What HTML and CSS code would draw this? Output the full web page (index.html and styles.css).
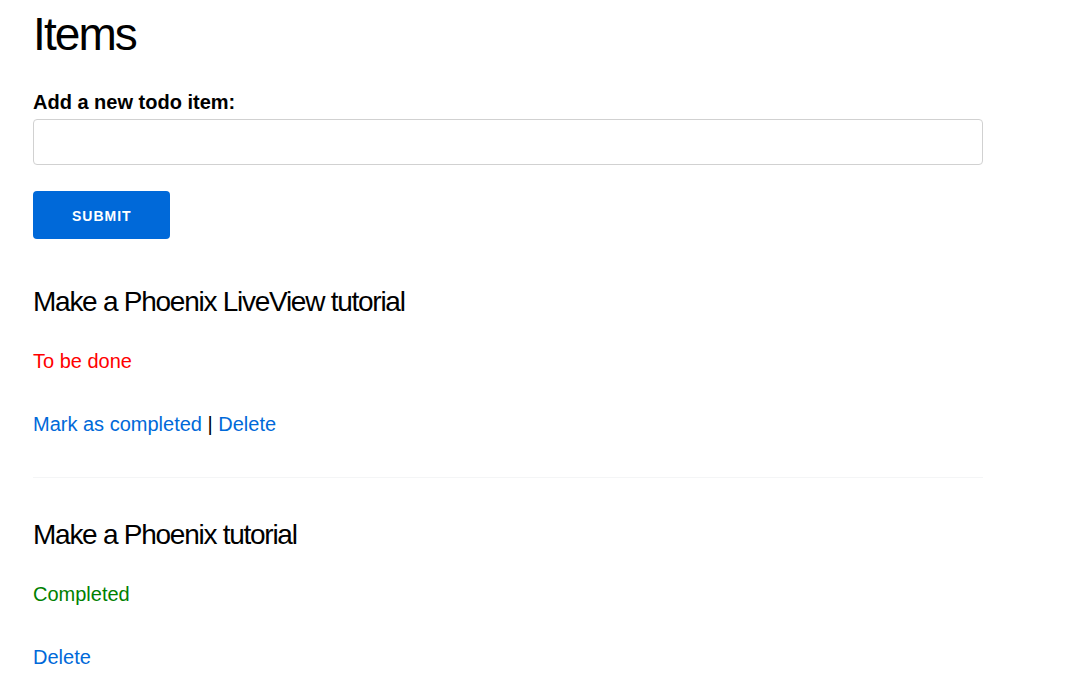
FILE: index.html
```html
<!DOCTYPE html>
<html lang="en">
<head>
  <meta charset="UTF-8">
  <title>Items</title>
  <link rel="stylesheet" href="styles.css">
</head>
<body>
  <main class="container">
    <h1>Items</h1>
    <form class="new-item">
      <label for="item-text">Add a new todo item:</label>
      <input type="text" id="item-text" name="text">
      <button type="submit">Submit</button>
    </form>

    <section class="item">
      <h3>Make a Phoenix LiveView tutorial</h3>
      <p class="status todo">To be done</p>
      <p class="actions"><a href="#">Mark as completed</a> | <a href="#">Delete</a></p>
    </section>
    <hr>
    <section class="item">
      <h3>Make a Phoenix tutorial</h3>
      <p class="status done">Completed</p>
      <p class="actions"><a href="#">Delete</a></p>
    </section>
  </main>
</body>
</html>
```

FILE: styles.css
```css
html, body {
  margin: 0;
  padding: 0;
  background: #fff;
  color: #000;
  font-family: "Liberation Sans", Arial, sans-serif;
  font-size: 20px;
}
.container {
  width: 950px;
  padding: 6px 0 0 33px;
}
h1 {
  margin: 0;
  font-size: 46px;
  line-height: 56px;
  font-weight: 400;
  letter-spacing: -1.9px;
}
h3 {
  margin: 0;
  font-size: 28px;
  line-height: 36px;
  font-weight: 400;
  letter-spacing: -1.26px;
}
p {
  margin: 0;
  line-height: 24px;
}
a {
  color: #0069d9;
  text-decoration: none;
}

/* new item form */
.new-item {
  display: flex;
  flex-direction: column;
  align-items: flex-start;
  padding-top: 28px;
}
.new-item label {
  font-weight: 700;
  line-height: 24px;
}
.new-item input {
  box-sizing: border-box;
  width: 950px;
  height: 46px;
  margin-top: 5px;
  padding: 0 12px;
  border: 1px solid #d1d1d1;
  border-radius: 4px;
  font: inherit;
  outline: none;
}
.new-item button {
  height: 48px;
  margin-top: 26px;
  padding: 1px 38px 0 39px;
  border: none;
  border-radius: 4px;
  background: #0069d9;
  color: #fff;
  font-family: inherit;
  font-size: 14px;
  font-weight: 700;
  letter-spacing: 1px;
  text-transform: uppercase;
  cursor: pointer;
}

/* items */
.item {
  padding-top: 45px;
}
hr + .item {
  padding-top: 39px;
}
.status {
  margin-top: 29px;
}
.todo {
  color: #ff0000;
}
.done {
  color: #008000;
}
.actions {
  margin-top: 39px;
}
hr {
  margin: 41px 0 0;
  border: none;
  border-top: 1px solid #f4f5f6;
  height: 0;
}
```
